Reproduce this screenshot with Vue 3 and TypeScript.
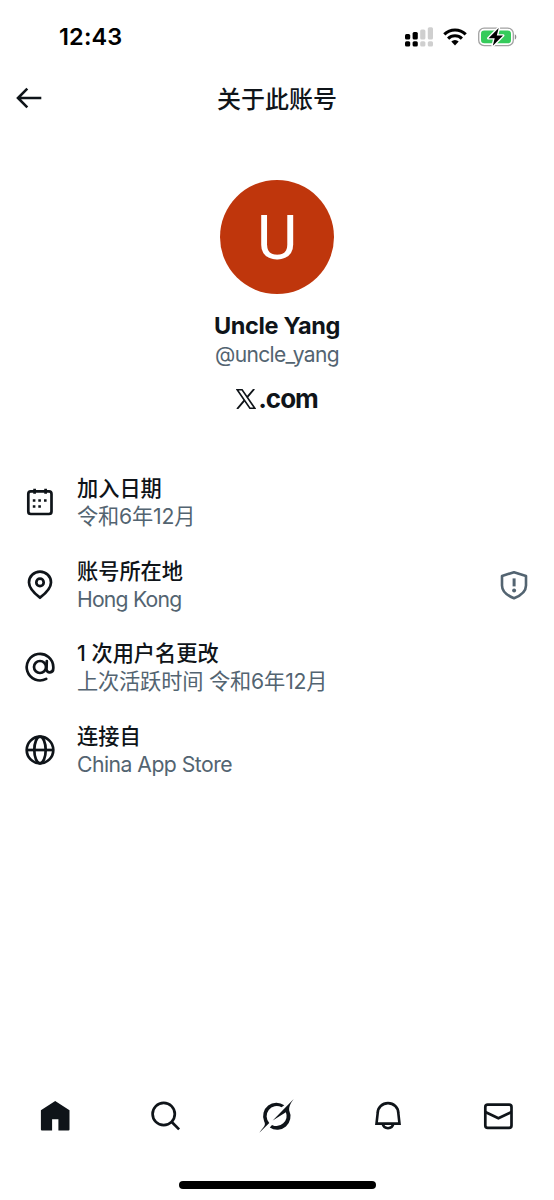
<script setup lang="ts">
interface InfoRow {
  id: 'joined' | 'location' | 'username' | 'source'
  title: string
  detail: string
  notice?: boolean
}

const rows: InfoRow[] = [
  { id: 'joined', title: '加入日期', detail: '令和6年12月' },
  { id: 'location', title: '账号所在地', detail: 'Hong Kong', notice: true },
  { id: 'username', title: '1 次用户名更改', detail: '上次活跃时间 令和6年12月' },
  { id: 'source', title: '连接自', detail: 'China App Store' },
]
</script>

<template>
  <div class="screen">
    <header class="status">
      <span class="time">12:43</span>
      <div class="indicators">
        <svg class="signal" width="28" height="20" viewBox="0 0 28 20">
          <g fill="#000">
            <rect x="0" y="7" width="5.2" height="5.4" rx="1.5" />
            <rect x="0" y="14.2" width="5.2" height="5.4" rx="1.5" />
            <rect x="7.6" y="5" width="5.2" height="7.4" rx="1.5" />
            <rect x="7.6" y="14.2" width="5.2" height="5.4" rx="1.5" />
          </g>
          <g fill="#cfcfcf">
            <rect x="15.2" y="2.6" width="5.2" height="9.8" rx="1.5" />
            <rect x="15.2" y="14.2" width="5.2" height="5.4" rx="1.5" />
            <rect x="22.8" y="0.2" width="5.2" height="12.2" rx="1.5" />
            <rect x="22.8" y="14.2" width="5.2" height="5.4" rx="1.5" />
          </g>
        </svg>
        <svg class="wifi" width="24" height="18" viewBox="0 0 24 18">
          <g fill="none" stroke="#000" stroke-width="3.1">
            <path d="M1.3 6.4a15.3 15.3 0 0 1 21.4 0" />
            <path d="M5.1 10.6a9.8 9.8 0 0 1 13.8 0" />
          </g>
          <path d="M8.3 13.6a5.3 5.3 0 0 1 7.4 0L12 17.4Z" fill="#000" />
        </svg>
        <svg class="battery" width="39" height="20" viewBox="0 0 39 20">
          <rect x="0.7" y="1.2" width="34.6" height="17.4" rx="5.4" fill="#fff" stroke="#a2a2a2" stroke-width="1.3" />
          <rect x="3" y="3.5" width="30" height="12.8" rx="3.3" fill="#35cb5b" />
          <path d="M36.8 7.2c2 .8 2 4.6 0 5.4Z" fill="#8f8f8f" />
          <path d="M20.7 1 10.5 11.2h6.2L14.8 18.8 25 8.6h-6.2Z" fill="#000" stroke="#fff" stroke-width="2.8" stroke-linejoin="round" paint-order="stroke" />
        </svg>
      </div>
    </header>

    <nav class="topbar">
      <svg class="back" width="26" height="22" viewBox="0 0 26 22">
        <path d="M11.3 1.7 2 11l9.3 9.3M2 11h23.3" fill="none" stroke="#0f1419" stroke-width="2.6" />
      </svg>
      <h1>关于此账号</h1>
    </nav>

    <section class="profile">
      <div class="avatar"><span>U</span></div>
      <div class="name">Uncle Yang</div>
      <div class="handle">@uncle_yang</div>
      <div class="brand">
        <svg width="20" height="20" viewBox="0 0 20 20">
          <path d="M1.2.8h4.900l12.700 18.400h-4.900Z" fill="none" stroke="#0f1419" stroke-width="1.600" />
          <path d="M18.200 0 11 8.400M8.400 11.400 1.100 20" fill="none" stroke="#0f1419" stroke-width="1.900" />
        </svg>
        <span>.com</span>
      </div>
    </section>

    <ul class="rows">
      <li v-for="row in rows" :key="row.id" class="row">
        <svg class="row-icon" width="32" height="32" viewBox="0 0 32 32" fill="none" stroke="#0f1419" stroke-width="2.7">
          <g v-if="row.id === 'joined'">
            <rect x="4.3" y="5.4" width="23.2" height="22.6" rx="2.5" />
            <path d="M10.600 2.800v5M21.600 2.800v5" />
            <path d="M8.800 14.500h2.600M14.300 14.500h2.600M20 14.500h2.600M8.800 20.500h2.600M14.300 20.500h2.600" stroke-width="2.600" />
          </g>
          <g v-else-if="row.id === 'location'">
            <path d="M16 28.600C9.700 23.800 5 19.200 5 13.400a11 10.800 0 0 1 22 0c0 5.800-4.700 10.400-11 15.200Z" />
            <circle cx="16" cy="13.400" r="3.700" />
          </g>
          <g v-else-if="row.id === 'username'" stroke-linecap="round">
            <path d="M22.200 27.900A13.300 13.300 0 1 1 29.300 16v1.200c0 5.200-6.800 5.600-6.800.8l.3-8" />
            <circle cx="16" cy="16" r="6" />
          </g>
          <g v-else>
            <circle cx="16" cy="16" r="13.300" />
            <ellipse cx="16" cy="16" rx="5.700" ry="13.300" />
            <path d="M2.600 16h26.800" />
          </g>
        </svg>
        <div class="row-text">
          <div class="row-title">{{ row.title }}</div>
          <div class="row-detail" :class="row.id">{{ row.detail }}</div>
        </div>
        <svg v-if="row.notice" class="shield" width="28" height="30" viewBox="0 0 28 30">
          <path d="M14 2.200 26 6v9.500c0 6-4.500 9.800-12 12.800C6.500 25.300 2 21.500 2 15.500V6Z" fill="none" stroke="#536471" stroke-width="2.600" stroke-linejoin="round" />
          <path d="M12.600 8.400h3v8h-3Z" fill="#536471" />
          <circle cx="14.100" cy="20.400" r="2" fill="#536471" />
        </svg>
      </li>
    </ul>

    <footer class="tabs">
      <div class="tab">
        <svg width="36" height="36" viewBox="0 0 36 36">
          <path d="M18.200 2.900 32.500 12.200V31.500a1 1 0 0 1-1 1H21.400V21.200h-6.300V32.500H4.900a1 1 0 0 1-1-1V12.200Z" fill="#0f1419" />
        </svg>
      </div>
      <div class="tab">
        <svg width="36" height="36" viewBox="0 0 36 36" fill="none" stroke="#0f1419" stroke-width="2.700">
          <circle cx="15.700" cy="16" r="11.100" />
          <path d="m23.500 23.800 7.600 7.600" />
        </svg>
      </div>
      <div class="tab">
        <svg width="36" height="36" viewBox="0 0 36 36" fill="#0f1419">
          <path d="M25.300 7.200A13.400 13.400 0 0 0 5.100 23.200C5.900 25.200 6.400 26.200 5.200 28.200C4 30.200 1.900 32.300.3 34.700L10.300 25A10.100 10.100 0 0 1 22.600 9.300Z" />
          <path d="M34.700 1C32.400 4.300 29.700 7.700 30.200 12.600A13.400 13.400 0 0 1 10.800 29.600L13 26.900A10.100 10.100 0 0 0 26.900 14.300L13.700 22.600Z" />
        </svg>
      </div>
      <div class="tab">
        <svg width="36" height="36" viewBox="0 0 36 36" fill="none" stroke="#0f1419" stroke-width="2.600">
          <path d="M6.500 25.600 7.700 15a10.300 9.900 0 0 1 20.600 0l1.200 10.600Z" />
          <path d="M12.600 25.600a5.500 5.700 0 0 0 10.800 0" />
        </svg>
      </div>
      <div class="tab">
        <svg width="36" height="36" viewBox="0 0 36 36" fill="none" stroke="#0f1419" stroke-width="2.700">
          <rect x="4.300" y="6.700" width="26.200" height="23.200" rx="2.400" />
          <path d="m4.300 14 13.100 6.300L30.500 14" />
        </svg>
      </div>
    </footer>
    <div class="home-indicator"></div>
  </div>
</template>

<style>
body {
  margin: 0;
  background: #fff;
}
</style>

<style scoped>
.screen {
  display: flex;
  flex-direction: column;
  box-sizing: border-box;
  width: 554px;
  height: 1200px;
  overflow: hidden;
  background: #fff;
  color: #0f1419;
  font-family: Inter, "Noto Sans CJK SC", sans-serif;
}
.status {
  display: flex;
  align-items: center;
  justify-content: space-between;
  height: 74px;
  padding: 0 37px 0 59px;
}
.time {
  color: #000;
  font-size: 23.500px;
  font-weight: 600;
  line-height: 28px;
  letter-spacing: 0.150px;
}
.indicators {
  display: flex;
  align-items: center;
}
.wifi {
  margin-left: 10px;
}
.battery {
  margin-left: 11px;
}
.topbar {
  display: grid;
  grid-template-columns: 60px 1fr 60px;
  align-items: center;
  height: 48px;
}
.back {
  margin-left: 16px;
}
h1 {
  margin: 0;
  padding-top: 3px;
  text-align: center;
  font-size: 24px;
  font-weight: 500;
  line-height: 32px;
}
.profile {
  display: flex;
  flex-direction: column;
  align-items: center;
  height: 339px;
  padding-top: 58px;
  box-sizing: border-box;
}
.avatar {
  display: flex;
  align-items: center;
  justify-content: center;
  flex: none;
  width: 114px;
  height: 114px;
  border-radius: 50%;
  background: #bf360c;
  color: #fff;
  font: 400 62px/70px Roboto, sans-serif;
}
.avatar span {
  padding-top: 2px;
}
.name {
  margin-top: 17px;
  font-size: 23.500px;
  font-weight: 700;
  line-height: 30px;
  letter-spacing: -0.350px;
}
.handle {
  color: #536471;
  font-size: 21px;
  line-height: 28px;
  letter-spacing: -0.650px;
}
.brand {
  display: flex;
  align-items: center;
  gap: 2px;
  margin-top: 14px;
  font-size: 26px;
  font-weight: 700;
  line-height: 32px;
  letter-spacing: -1px;
}
.rows {
  display: flex;
  flex-direction: column;
  margin: 0;
  padding: 0;
  list-style: none;
}
.row {
  display: flex;
  align-items: center;
  height: 82.500px;
  padding: 0 26px 0 24px;
}
.row-icon {
  flex: none;
}
.row-text {
  flex: 1;
  margin-left: 21px;
  white-space: nowrap;
}
.row-title {
  font-size: 21.200px;
  font-weight: 500;
  line-height: 28px;
}
.row-detail {
  color: #536471;
  font-size: 21.200px;
  line-height: 28px;
  letter-spacing: -0.150px;
}
.row-detail.location {
  letter-spacing: -0.800px;
}
.row-detail.source {
  letter-spacing: -0.530px;
}
.shield {
  flex: none;
}
.tabs {
  display: grid;
  grid-template-columns: repeat(5, 1fr);
  margin-top: auto;
  height: 82px;
}
.tab {
  display: flex;
  align-items: center;
  justify-content: center;
}
.home-indicator {
  width: 197px;
  height: 8px;
  margin: 24px auto 11px;
  border-radius: 4px;
  background: #000;
}
</style>
